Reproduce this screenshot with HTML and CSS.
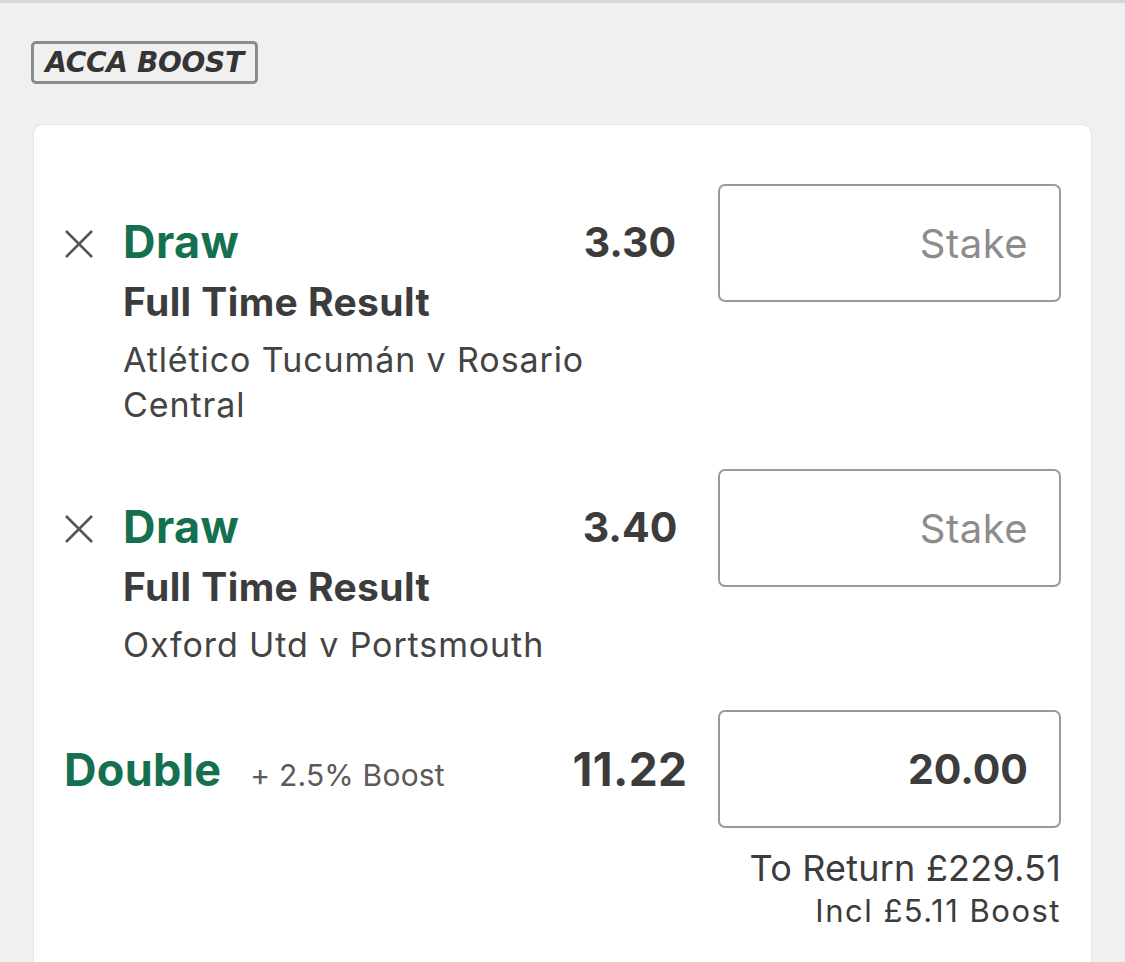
FILE: index.html
```html
<!DOCTYPE html>
<html lang="en">
<head>
<meta charset="utf-8">
<title>Bet slip</title>
<link rel="stylesheet" href="styles.css">
</head>
<body>
<div class="topline"></div>
<main class="page">
  <div class="badge"><span>ACCA BOOST</span></div>
  <section class="card">
    <div class="sel">
      <button class="remove" aria-label="Remove">
        <svg viewBox="0 0 30 30" width="30" height="30"><path d="M2 2 L28 28 M28 2 L2 28" stroke="#555" stroke-width="2.6" fill="none"/></svg>
      </button>
      <div class="title">Draw</div>
      <div class="odds">3.30</div>
      <div class="stake"><span class="ph">Stake</span></div>
      <div class="market">Full Time Result</div>
      <div class="match">Atlético Tucumán v Rosario Central</div>
    </div>
    <div class="sel">
      <button class="remove" aria-label="Remove">
        <svg viewBox="0 0 30 30" width="30" height="30"><path d="M2 2 L28 28 M28 2 L2 28" stroke="#555" stroke-width="2.6" fill="none"/></svg>
      </button>
      <div class="title">Draw</div>
      <div class="odds">3.40</div>
      <div class="stake"><span class="ph">Stake</span></div>
      <div class="market">Full Time Result</div>
      <div class="match">Oxford Utd v Portsmouth</div>
    </div>
    <div class="multi">
      <div class="multi-name">
        <span class="dbl">Double</span>
        <span class="boost">+ 2.5% Boost</span>
      </div>
      <div class="multi-odds">11.22</div>
      <div class="stake"><span class="val">20.00</span></div>
    </div>
    <div class="returns">
      <div class="ret">To Return £229.51</div>
      <div class="incl">Incl £5.11 Boost</div>
    </div>
  </section>
</main>
</body>
</html>
```
FILE: styles.css
```css
html, body {
  margin: 0;
  padding: 0;
  background: #f0f0f0;
  font-family: Inter, "Noto Sans", "Liberation Sans", sans-serif;
  color: #3c3c3c;
  overflow: hidden;
}
.topline {
  height: 3px;
  background: #d6d6d6;
}
.page {
  padding: 38px 33px 0 33px;
}
.badge {
  display: inline-flex;
  align-items: center;
  justify-content: center;
  box-sizing: border-box;
  width: 227px;
  height: 43px;
  margin-left: -2px;
  border: 3px solid #8c8c8c;
  border-radius: 5px;
}
.badge span {
  font-family: "DejaVu Sans", sans-serif;
  font-weight: bold;
  font-style: italic;
  font-size: 28px;
  letter-spacing: -0.3px;
  color: #353535;
  line-height: 1;
}
.card {
  margin-top: 40px;
  background: #fff;
  border: 1px solid #e4e4e4;
  border-radius: 10px;
  padding: 59px 30px 40px 30px;
  min-height: 900px;
}
.sel {
  display: grid;
  grid-template-columns: 59px 1fr 122px 371px;
  margin-bottom: 42px;
}
.sel .stake {
  grid-column: 4;
  grid-row: 1 / span 3;
  align-self: start;
  margin-left: 28px;
}
.remove {
  grid-column: 1;
  grid-row: 1;
  background: none;
  border: 0;
  padding: 0;
  margin-top: 45px;
  align-self: start;
  width: 30px;
  height: 30px;
}
.remove svg { display: block; }
.title {
  grid-column: 2;
  grid-row: 1;
  margin-top: 35px;
  line-height: 46px;
  font-size: 45px;
  font-weight: 700;
  color: #14704e;
  letter-spacing: 0.4px;
}
.odds {
  grid-column: 3;
  grid-row: 1;
  margin-top: 35px;
  line-height: 46px;
  text-align: center;
  font-size: 41px;
  font-weight: 700;
  color: #3c3c3c;
  padding-left: 2px;
}
.market {
  grid-column: 2 / span 2;
  grid-row: 2;
  margin-top: 14px;
  line-height: 46px;
  font-size: 39px;
  font-weight: 700;
  letter-spacing: 0.4px;
  color: #3c3c3c;
}
.match {
  grid-column: 2 / span 2;
  grid-row: 3;
  margin-top: 12px;
  line-height: 45px;
  font-size: 34px;
  font-weight: 400;
  letter-spacing: 0.9px;
  color: #444;
  padding-right: 40px;
}
.stake {
  box-sizing: border-box;
  height: 118px;
  border: 2px solid #9a9a9a;
  border-radius: 7px;
  display: flex;
  align-items: center;
  justify-content: flex-end;
  padding-right: 31px;
}
.ph {
  font-size: 40px;
  letter-spacing: 0.5px;
  color: #8c8c8c;
}
.val {
  font-size: 41px;
  font-weight: 700;
  color: #3c3c3c;
}
.multi {
  display: grid;
  grid-template-columns: 1fr 120px 371px;
  align-items: center;
  padding-top: 1px;
}
.multi .stake { margin-left: 28px; }
.multi-name {
  display: flex;
  align-items: baseline;
  gap: 29px;
}
.dbl {
  font-size: 45px;
  font-weight: 700;
  color: #14704e;
  letter-spacing: 0.3px;
}
.boost {
  font-size: 30px;
  letter-spacing: 0.2px;
  color: #5a5a5a;
}
.multi-odds {
  text-align: center;
  font-size: 46px;
  font-weight: 700;
  letter-spacing: 0.4px;
  color: #3c3c3c;
}
.returns {
  text-align: right;
  margin-top: 19px;
}
.ret {
  font-size: 36px;
  line-height: 42px;
  letter-spacing: 0.2px;
  color: #3c3c3c;
}
.incl {
  font-size: 31px;
  line-height: 44px;
  letter-spacing: 1.5px;
  color: #3c3c3c;
}
```
